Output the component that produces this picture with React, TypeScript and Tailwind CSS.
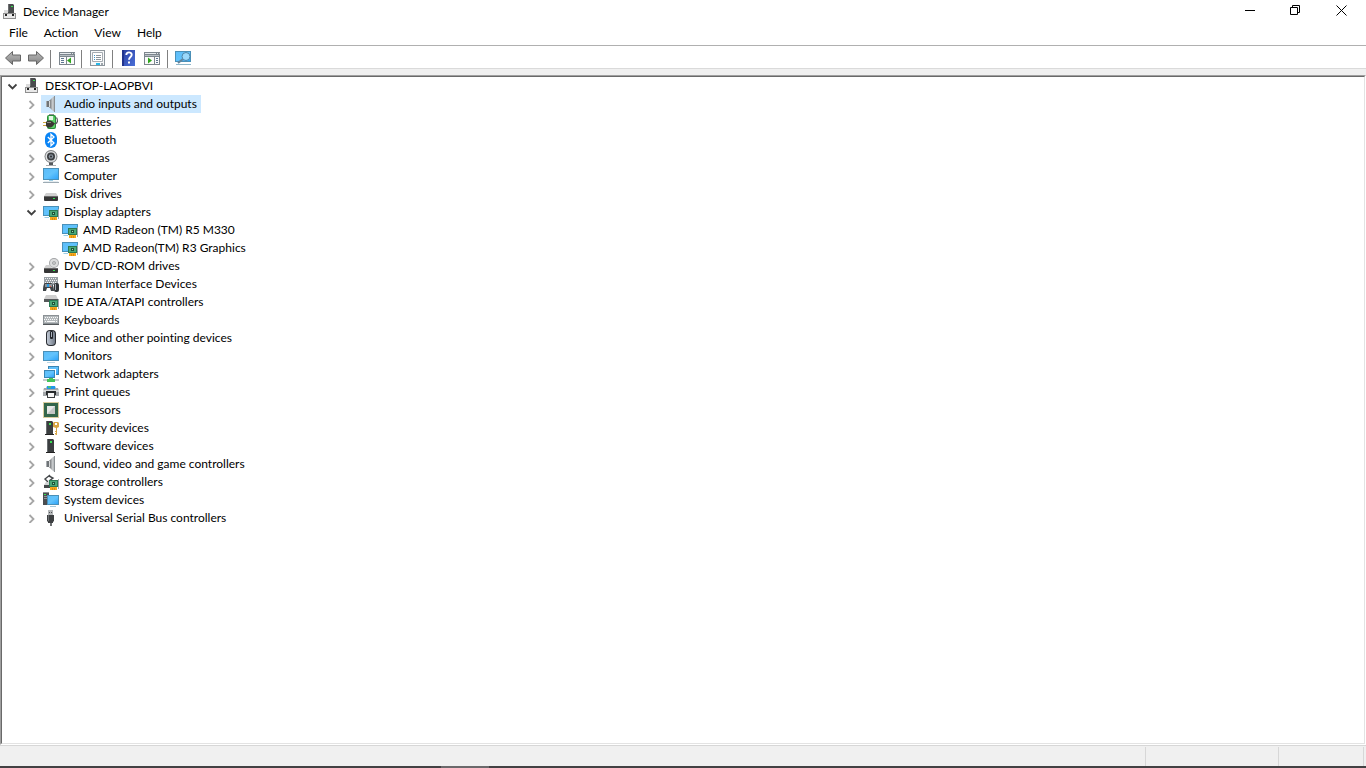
import { useState, type ReactNode } from 'react';
import clsx from 'clsx';

function Icon({ children }: { children: ReactNode }) {
  return (
    <svg viewBox="0 0 16 16" className="size-4 shrink-0" aria-hidden="true">
      {children}
    </svg>
  );
}

/* shared gradients, referenced by every icon below */
function IconDefs() {
  return (
    <svg className="absolute size-0" aria-hidden="true">
      <defs>
        <linearGradient id="screen" x1="0" y1="0" x2="1" y2="1">
          <stop offset="0" stopColor="#5cbcf8" />
          <stop offset="0.5" stopColor="#62c3fc" />
          <stop offset="1" stopColor="#2fa4fa" />
        </linearGradient>
        <linearGradient id="metal" x1="0" y1="0" x2="1" y2="0">
          <stop offset="0" stopColor="#5d6063" />
          <stop offset="0.6" stopColor="#c9ccce" />
          <stop offset="1" stopColor="#9ea2a5" />
        </linearGradient>
        <linearGradient id="mouse" x1="0" y1="0" x2="1" y2="0">
          <stop offset="0" stopColor="#c0c8d4" />
          <stop offset="1" stopColor="#727b88" />
        </linearGradient>
        <linearGradient id="arrow" x1="0" y1="0" x2="0" y2="1">
          <stop offset="0" stopColor="#b5b5b5" />
          <stop offset="0.5" stopColor="#a0a0a0" />
          <stop offset="1" stopColor="#7c7c7c" />
        </linearGradient>
        <linearGradient id="help" x1="0" y1="0" x2="1" y2="1">
          <stop offset="0" stopColor="#2b3fa0" />
          <stop offset="1" stopColor="#4a6fd8" />
        </linearGradient>
      </defs>
    </svg>
  );
}

const Card = () => (
  <>
    <path d="M7 12h7v4H7z" fill="#f7a81c" />
    <path d="M9 14h1v2H9zM11 14h1v2h-1z" fill="#d98a10" />
    <rect x="6" y="6" width="9" height="7" fill="#2b7a54" />
    <rect x="7" y="7" width="7" height="5" fill="#4ba878" />
    <rect x="9" y="8" width="3" height="3" fill="#1c5538" />
    <rect x="10" y="9" width="1" height="1" fill="#9fdcb2" />
    <rect x="15" y="5" width="1" height="10" fill="#a4a8ab" />
  </>
);

const Tower = ({ x = 5 }: { x?: number }) => (
  <g transform={`translate(${x - 5} 0)`}>
    <path d="M5 1h6l1 1v12H5z" fill="#3b3e40" />
    <rect x="5" y="1" width="1" height="13" fill="#696d70" />
    <rect x="8" y="3" width="2" height="2" fill="#39e052" />
    <path d="M4 14h9v1H4z" fill="#222" />
  </g>
);

const driveBody = (
  <>
    <rect x="1" y="10" width="14" height="5" rx="1" fill="#363636" />
    <rect x="1" y="10" width="14" height="1" fill="#6a6a6a" />
    <rect x="10" y="12" width="2" height="1" fill="#31e04f" />
  </>
);

const speaker = (
  <Icon>
    <path d="M3 5h3v6H3z" fill="#6f7477" />
    <path d="M3 5h1v6H3z" fill="#a9adb0" />
    <path d="M6 5l4-4 2-1v16l-2-1-4-4z" fill="url(#metal)" />
    <path d="M6 5h1v6H6z" fill="#d8dadb" />
    <path d="M11 0h1v16h-1z" fill="#8b9094" />
  </Icon>
);

const displayAdapter = (
  <Icon>
    <path d="M0 2h16v10H0z" fill="#4a90b8" />
    <path d="M1 3h14v8H1z" fill="url(#screen)" />
    <path d="M2 13h4v1H1z" fill="#9ccde4" />
    <Card />
  </Icon>
);

const icons = {
  root: (
    <Icon>
      <path d="M6 0h5l1 1v8H6z" fill="#4a4c4e" />
      <path d="M6 0h1v8H6z" fill="#6d6f71" />
      <rect x="9" y="2" width="2" height="1" fill="#39e052" />
      <path d="M2 6h4v3H2z" fill="#dadada" />
      <path d="M1 9h13v6H1z" fill="#8f8f8f" />
      <path d="M2 10h11v4H2z" fill="#e8e8e8" />
      <rect x="3" y="10" width="2" height="2" fill="#222" />
      <rect x="10" y="10" width="2" height="2" fill="#222" />
    </Icon>
  ),
  speaker,
  battery: (
    <Icon>
      <path d="M6 0h5v2H6z" fill="#8d9295" />
      <rect x="4" y="1" width="9" height="14" rx="2" fill="#2a8c38" />
      <path d="M5 2h6l1 2v9l-1 1H6z" fill="#5bd069" />
      <path d="M6 2h4v4H6z" fill="#e4f5e5" />
      <path d="M12 10c3-1 3-4 1.500-6.500" fill="none" stroke="#4f5557" strokeWidth="1.200" />
      <path d="M3 8c2-2 5-2 7 0l2 1.500-2 2.500c-2 2-5 2-7 0z" fill="#3a3833" />
      <path d="M0 8h3v1H0zM0 11h3v1H0z" fill="#cba640" />
      <path d="M4 8h4v1H4z" fill="#8c887d" />
    </Icon>
  ),
  bluetooth: (
    <Icon>
      <rect x="2" y="0" width="12" height="16" rx="6" fill="#0a84f5" />
      <path d="M4.800 5l6.200 6-3 2.800V2.200L11 5l-6.200 6" fill="none" stroke="#fff" strokeWidth="1.300" />
    </Icon>
  ),
  camera: (
    <Icon>
      <path d="M6 12h4v3H6z" fill="#55585b" />
      <path d="M3 15h10v1H3z" fill="#a9abad" />
      <circle cx="8" cy="6.5" r="6.500" fill="#7f8284" />
      <circle cx="8" cy="6.5" r="5.500" fill="#dcdee0" />
      <circle cx="8" cy="6.5" r="4" fill="#3b3e41" />
      <circle cx="8" cy="6.5" r="2.300" fill="#858f9a" />
      <circle cx="8" cy="6.5" r="1" fill="#2b2e31" />
    </Icon>
  ),
  computer: (
    <Icon>
      <path d="M0 0h16v12H0z" fill="#4a90b8" />
      <path d="M1 1h14v10H1z" fill="url(#screen)" />
      <path d="M6 12h4v1H6z" fill="#9ccde4" />
      <path d="M1 13h14l1 2H0z" fill="#e4ecf0" />
      <path d="M0 14h16v1H0z" fill="#9dabb4" />
    </Icon>
  ),
  disk: (
    <Icon>
      <path d="M3 7h10l2 3H1z" fill="#d0d0d0" />
      {driveBody}
    </Icon>
  ),
  display: displayAdapter,
  dvd: (
    <Icon>
      <circle cx="11" cy="5" r="5" fill="#a3a5a7" />
      <circle cx="11" cy="5" r="4" fill="#dcdddd" />
      <circle cx="11" cy="5" r="1.800" fill="#8e9092" />
      <circle cx="11" cy="5" r="0.800" fill="#fff" />
      <path d="M3 7h4l2 3H1z" fill="#d0d0d0" />
      {driveBody}
    </Icon>
  ),
  hid: (
    <Icon>
      <path d="M1 1h14v8H1z" fill="#9aa0a5" />
      <path d="M2 2.500h12M3 4.500h12M2 6.500h12" stroke="#f2f3f4" strokeDasharray="1 1" />
      <path d="M0 15c0-5 1-8 2-8h6c1 0 3 3 3 8H8l-1-3H4l-1 3z" fill="#3f4448" />
      <path d="M2 8h7v3H2z" fill="#8e959a" />
      <rect x="4" y="8" width="2" height="3" fill="#2c9de8" />
      <rect x="7" y="10" width="1" height="1" fill="#e24c3c" />
      <rect x="11" y="7" width="5" height="9" rx="2" fill="#2f3337" />
      <rect x="12" y="8" width="1" height="6" fill="#a4abb3" />
    </Icon>
  ),
  ide: (
    <Icon>
      <path d="M3 1h10l2 4H1z" fill="#cfcfcf" />
      <path d="M1 5h14v3H1z" fill="#55585a" />
      <Card />
    </Icon>
  ),
  keyboard: (
    <Icon>
      <rect x="0" y="3" width="16" height="10" fill="#8b9195" />
      <rect x="1" y="4" width="14" height="7" fill="#b4b9bc" />
      <path d="M2 5.500h13M1 7.500h14M2 9.500h1M13 9.500h1" stroke="#f9fafa" strokeDasharray="1 1" />
      <path d="M4 9h8v1H4z" fill="#f9fafa" />
      <path d="M0 12h16v1H0z" fill="#53585b" />
    </Icon>
  ),
  mouse: (
    <Icon>
      <rect x="3" y="0" width="10" height="16" rx="4" fill="#292c31" />
      <rect x="4" y="1" width="8" height="14" rx="3" fill="url(#mouse)" />
      <rect x="7" y="1" width="3" height="8" rx="1" fill="#22252a" />
      <path d="M8.500 2v5" stroke="#aab2be" />
    </Icon>
  ),
  monitor: (
    <Icon>
      <path d="M0 3h16v10H0z" fill="#4a90b8" />
      <path d="M1 4h14v8H1z" fill="url(#screen)" />
      <path d="M4 14h8v1H4z" fill="#b8d5e4" />
    </Icon>
  ),
  network: (
    <Icon>
      <path d="M5 0h11v9H5z" fill="#3a86b4" />
      <path d="M6 1h9v7H6z" fill="url(#screen)" />
      <path d="M0 3h13v9H0z" fill="#fff" />
      <path d="M1 4h11v8H1z" fill="#3a86b4" />
      <path d="M2 5h9v6H2z" fill="url(#screen)" />
      <path d="M0 13h16v2H0z" fill="#c7cccf" />
      <path d="M6 12h4v1h2v3H4v-3h2z" fill="#44c45a" />
    </Icon>
  ),
  printer: (
    <Icon>
      <path d="M4 2h8l1 3H3z" fill="#2196e8" />
      <path d="M5 2h3v2H5z" fill="#44c07a" />
      <path d="M1 4h3v1h8V4h3l1 3v5H0V7z" fill="#a3a7aa" />
      <path d="M0 6h16v2H0z" fill="#d9dbdc" />
      <path d="M3 7h10v4H3z" fill="#26292b" />
      <path d="M4 9h8v5H4z" fill="#3a3d3f" />
      <path d="M5 9h6v4H5z" fill="#f6f6f6" />
    </Icon>
  ),
  processor: (
    <Icon>
      <rect x="0.5" y="0.5" width="15" height="15" fill="none" stroke="#b29a3f" strokeDasharray="1 1" />
      <rect x="1" y="1" width="14" height="14" fill="#33664b" />
      <rect x="4" y="4" width="8" height="8" fill="#c4c7c6" />
      <path d="M4 12V4h8z" fill="#e6e8e7" />
    </Icon>
  ),
  security: (
    <Icon>
      <Tower x={3} />
      <path d="M11 2h4l1 1v4l-2 1v7h-1l-1-1v-1h1v-1h-1v-1h1V8l-3-1V3z" fill="#d8a545" />
      <path d="M12 3h2v2h-2z" fill="#fff" />
    </Icon>
  ),
  tower: (
    <Icon>
      <Tower x={4} />
    </Icon>
  ),
  storage: (
    <Icon>
      <path d="M7 1L2 5l3 3M6 2l4 2-4 3" fill="none" stroke="#44474a" strokeWidth="1.400" />
      <path d="M3 8h5l1 3H1z" fill="#d0d2d3" />
      <path d="M1 11h6v3H1z" fill="#444749" />
      <Card />
    </Icon>
  ),
  system: (
    <Icon>
      <path d="M0 0h6v13H0z" fill="#4a4d50" />
      <path d="M0 0h6v1H0zM1 4h3v1H1zM1 6h3v1H1z" fill="#8d9194" />
      <rect x="1" y="2" width="2" height="1" fill="#39e052" />
      <path d="M4 3h12v10H4z" fill="#4a90b8" />
      <path d="M5 4h10v8H5z" fill="url(#screen)" />
      <path d="M7 14h6v1H7z" fill="#a6c9da" />
    </Icon>
  ),
  usb: (
    <Icon>
      <path d="M5 0h5v5H5z" fill="#b5b8ba" />
      <path d="M6 2h1v1H6zM8 2h1v1H8z" fill="#4e5153" />
      <path d="M4 5h7v6l-1 1v1H5v-1l-1-1z" fill="#3d4042" />
      <path d="M5 5h1v6H5z" fill="#6d7072" />
      <path d="M7 13h2v3H7z" fill="#6c6f71" />
    </Icon>
  ),
};

type Device = {
  name: string;
  icon: keyof typeof icons;
  children?: string[];
};

const DEVICES: Device[] = [
  { name: 'Audio inputs and outputs', icon: 'speaker' },
  { name: 'Batteries', icon: 'battery' },
  { name: 'Bluetooth', icon: 'bluetooth' },
  { name: 'Cameras', icon: 'camera' },
  { name: 'Computer', icon: 'computer' },
  { name: 'Disk drives', icon: 'disk' },
  {
    name: 'Display adapters',
    icon: 'display',
    children: ['AMD Radeon (TM) R5 M330', 'AMD Radeon(TM) R3 Graphics'],
  },
  { name: 'DVD/CD-ROM drives', icon: 'dvd' },
  { name: 'Human Interface Devices', icon: 'hid' },
  { name: 'IDE ATA/ATAPI controllers', icon: 'ide' },
  { name: 'Keyboards', icon: 'keyboard' },
  { name: 'Mice and other pointing devices', icon: 'mouse' },
  { name: 'Monitors', icon: 'monitor' },
  { name: 'Network adapters', icon: 'network' },
  { name: 'Print queues', icon: 'printer' },
  { name: 'Processors', icon: 'processor' },
  { name: 'Security devices', icon: 'security' },
  { name: 'Software devices', icon: 'tower' },
  { name: 'Sound, video and game controllers', icon: 'speaker' },
  { name: 'Storage controllers', icon: 'storage' },
  { name: 'System devices', icon: 'system' },
  { name: 'Universal Serial Bus controllers', icon: 'usb' },
];

function TreeRow({
  name,
  icon,
  open,
  onToggle,
  selected,
  onSelect,
}: {
  name: string;
  icon: keyof typeof icons;
  open?: boolean;
  onToggle?: () => void;
  selected: boolean;
  onSelect: () => void;
}) {
  return (
    <div className="flex h-[18px] items-center">
      {onToggle ? (
        <button
          type="button"
          aria-label={`${open ? 'Collapse' : 'Expand'} ${name}`}
          onClick={onToggle}
          className="flex h-full w-[18px] items-center pl-[3px]"
        >
          <svg viewBox="0 0 10 10" className="size-2.5" fill="none" strokeWidth="1.800" aria-hidden="true">
            {open ? <path d="M1.500 3.500l4 4 4-4" stroke="#404040" /> : <path d="M3.500 2l4 4-4 4" stroke="#a6a6a6" />}
          </svg>
        </button>
      ) : (
        <span className="w-[18px]" />
      )}
      <button
        type="button"
        onClick={onSelect}
        className={clsx(
          'flex h-full items-center gap-[5px] pl-0.5 pr-1 leading-4 whitespace-nowrap',
          selected && 'bg-[#cce8ff]',
        )}
      >
        {icons[icon]}
        <span>{name}</span>
      </button>
    </div>
  );
}

function DeviceTree() {
  const [rootOpen, setRootOpen] = useState(true);
  const [open, setOpen] = useState<string[]>(['Display adapters']);
  const [selected, setSelected] = useState('Audio inputs and outputs');

  const toggle = (name: string) =>
    setOpen((prev) => (prev.includes(name) ? prev.filter((n) => n !== name) : [...prev, name]));

  return (
    <ul className="pl-0.5">
      <li>
        <TreeRow
          name="DESKTOP-LAOPBVI"
          icon="root"
          open={rootOpen}
          onToggle={() => setRootOpen(!rootOpen)}
          selected={selected === 'DESKTOP-LAOPBVI'}
          onSelect={() => setSelected('DESKTOP-LAOPBVI')}
        />
        {rootOpen && (
          <ul className="pl-[19px]">
            {DEVICES.map((device) => (
              <li key={device.name}>
                <TreeRow
                  name={device.name}
                  icon={device.icon}
                  open={open.includes(device.name)}
                  onToggle={() => toggle(device.name)}
                  selected={selected === device.name}
                  onSelect={() => setSelected(device.name)}
                />
                {device.children && open.includes(device.name) && (
                  <ul className="pl-[19px]">
                    {device.children.map((child) => (
                      <li key={child}>
                        <TreeRow
                          name={child}
                          icon={device.icon}
                          selected={selected === child}
                          onSelect={() => setSelected(child)}
                        />
                      </li>
                    ))}
                  </ul>
                )}
              </li>
            ))}
          </ul>
        )}
      </li>
    </ul>
  );
}

function TitleBar() {
  return (
    <header className="flex h-6 items-center justify-between px-0.5">
      <div className="flex items-center gap-[5px]">
        {icons.root}
        <h1>Device Manager</h1>
      </div>
      <div className="flex h-full items-start">
        <button type="button" aria-label="Minimize" className="flex h-5 w-[46px] items-center justify-center">
          <svg viewBox="0 0 11 11" className="size-[11px]" aria-hidden="true">
            <path d="M1 5.500h10" stroke="#000" />
          </svg>
        </button>
        <button type="button" aria-label="Restore" className="flex h-5 w-[46px] items-center justify-center">
          <svg viewBox="0 0 11 11" className="size-[11px]" fill="none" stroke="#000" aria-hidden="true">
            <path d="M0.500 2.500h7v7h-7zM2.500 2.500v-2h7v7h-2" />
          </svg>
        </button>
        <button type="button" aria-label="Close" className="flex h-5 w-[46px] items-center justify-center">
          <svg viewBox="0 0 11 11" className="size-[11px]" stroke="#000" aria-hidden="true">
            <path d="M0.500 0.500l10 10M10.500 0.500l-10 10" />
          </svg>
        </button>
      </div>
    </header>
  );
}

function ToolButton({ label, children }: { label: string; children: ReactNode }) {
  return (
    <button type="button" aria-label={label} className="flex h-5 w-6 items-center justify-center">
      <svg viewBox="0 0 18 16" className="h-4 w-[18px]" aria-hidden="true">
        {children}
      </svg>
    </button>
  );
}

const Separator = () => <span className="ml-0.5 mr-1 h-[18px] w-px bg-[#808080]" />;

const PaneWindow = () => (
  <>
    <path d="M1 2h16v13H1z" fill="#7d868d" />
    <path d="M2 3h11v1H2zM14 3h1v1h-1zM16 3h.5v1H16z" fill="#e6eaed" />
    <path d="M2 5h14v1H2z" fill="#b6bdc3" />
    <path d="M2 7h14v7H2z" fill="#fafafa" />
  </>
);

function Toolbar() {
  return (
    <div role="toolbar" className="box-content flex h-[22px] items-end border-t border-[#b0b0b0]">
      <ToolButton label="Back">
        <path d="M2.500 8L9.500 1.500v3.500h8v6h-8v3.500z" fill="url(#arrow)" stroke="#666" strokeLinejoin="round" />
      </ToolButton>
      <ToolButton label="Forward">
        <path d="M16.500 8L9.500 1.500v3.500h-8v6h8v3.500z" fill="url(#arrow)" stroke="#666" strokeLinejoin="round" />
      </ToolButton>
      <Separator />
      <ToolButton label="Show/Hide Console Tree">
        <PaneWindow />
        <path d="M8 7h1v7H8z" fill="#7d868d" />
        <path d="M3 8h3v1H3zM3 10h3v1H3zM3 12h3v1H3z" fill="#5d7590" />
        <path d="M13 7.500v6l-4-3z" fill="#2fa61c" />
      </ToolButton>
      <Separator />
      <ToolButton label="Properties">
        <rect x="1.500" y="0.500" width="14" height="15" fill="#f7f8f9" stroke="#8d959c" />
        <path d="M3.500 2.500h10v9h-10z" fill="#fff" stroke="#a5abb1" />
        <path d="M5 5h1v1H5zM5 7h1v1H5zM5 9h1v1H5z" fill="#3a92c9" />
        <path d="M7 5h5v1H7zM7 7h5v1H7zM7 9h5v1H7z" fill="#8d959c" />
        <path d="M7 13h4v2H7z" fill="#27b7e8" />
        <path d="M12 13h2v2h-2z" fill="#9da5ab" />
      </ToolButton>
      <Separator />
      <ToolButton label="Help">
        <rect x="2" y="0" width="13" height="16" fill="url(#help)" />
        <path d="M2 0h2v16H2z" fill="#22348c" />
        <path d="M6.300 5c0-3.500 5.400-3.500 5.400-.3 0 2.300-2.700 2.300-2.700 5" fill="none" stroke="#fff" strokeWidth="1.900" />
        <path d="M8 11.500h2v2H8z" fill="#fff" />
      </ToolButton>
      <ToolButton label="Show/Hide Action Pane">
        <g transform="translate(-1 0)">
          <PaneWindow />
          <path d="M11 7h1v7h-1z" fill="#7d868d" />
          <path d="M13 8h2v1h-2zM13 10h2v1h-2zM13 12h2v1h-2z" fill="#5d7590" />
          <path d="M5 7.500v6l4-3z" fill="#2fa61c" />
        </g>
      </ToolButton>
      <Separator />
      <ToolButton label="Scan for hardware changes">
        <path d="M0 1h16v11H0z" fill="#4a90b8" />
        <path d="M1 2h14v9H1z" fill="url(#screen)" />
        <path d="M1 14h15v1H1z" fill="#8fb6ca" />
        <path d="M8 9l-5 4" stroke="#65839a" strokeWidth="2" />
        <circle cx="11" cy="6.500" r="4" fill="#9ad8fb" stroke="#4f86a9" />
      </ToolButton>
    </div>
  );
}

export default function App() {
  return (
    <div className="flex h-screen flex-col overflow-hidden bg-white font-[Lato,'Open_Sans',sans-serif] text-[12px] leading-4 text-black [font-variant-ligatures:none]">
      <IconDefs />
      <TitleBar />
      <nav aria-label="Menu" className="flex h-[21px] items-start gap-4 pl-[9px] pt-px">
        {['File', 'Action', 'View', 'Help'].map((item) => (
          <button key={item} type="button">
            {item}
          </button>
        ))}
      </nav>
      <Toolbar />
      <div className="h-[7px] shrink-0 border-t border-[#dadada] bg-[#f0f0f0]" />
      {/* sunken pane, two-tone edge */}
      <main className="flex min-h-0 flex-1 flex-col border border-b-white border-l-[#a0a0a0] border-r-white border-t-[#a0a0a0]">
        <div className="min-h-0 flex-1 overflow-auto border border-b-[#e3e3e3] border-l-[#696969] border-r-[#e3e3e3] border-t-[#696969]">
          <DeviceTree />
        </div>
      </main>
      <footer className="flex h-[21px] shrink-0 justify-end border-t border-[#d7d7d7] bg-[#f0f0f0] pr-0.5 pt-px">
        <div className="w-[133px] border-l border-[#d7d7d7]" />
        <div className="w-[86px] border-x border-[#d7d7d7]" />
      </footer>
      <div className="flex h-0.5 shrink-0 bg-[#434143] pl-[441px]">
        <div className="w-12 bg-[#6b696b]" />
      </div>
    </div>
  );
}
